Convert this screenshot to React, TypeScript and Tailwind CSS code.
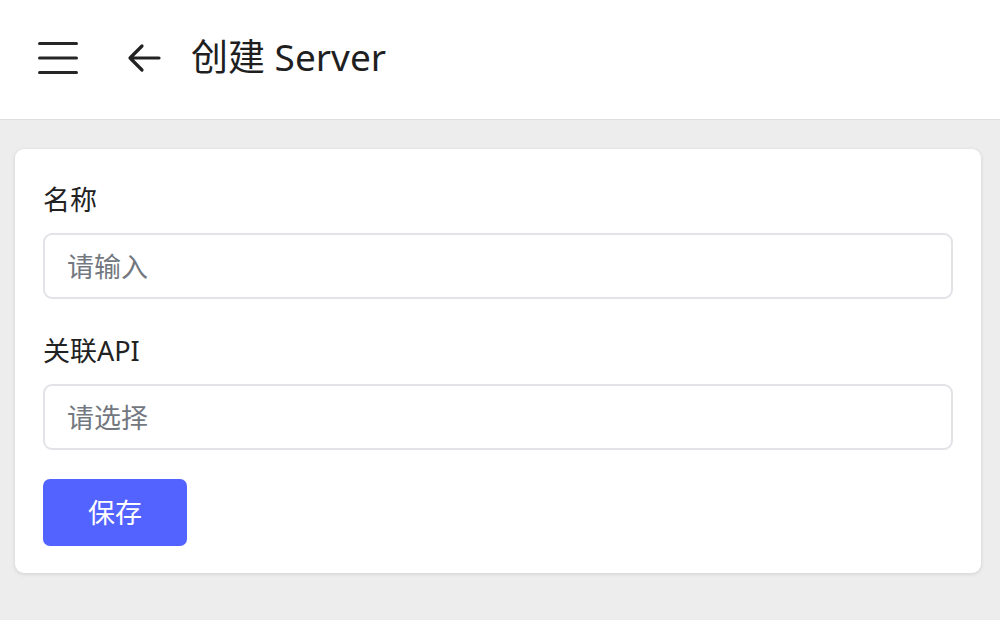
const font = { fontFamily: '"Noto Sans", "Noto Sans CJK SC", sans-serif' };

function MenuIcon() {
  return (
    <svg width="40" height="34" viewBox="0 0 40 34" fill="none">
      <path d="M1.5 2.5h37M1.5 17h37M1.5 31.5h37" stroke="#262626" strokeWidth="3" strokeLinecap="round" />
    </svg>
  );
}

function BackIcon() {
  return (
    <svg width="34" height="30" viewBox="0 0 34 30" fill="none">
      <path d="M32 15H3M15 3L3 15l12 12" stroke="#222" strokeWidth="3.2" strokeLinecap="round" strokeLinejoin="round" />
    </svg>
  );
}

export default function App() {
  return (
    <div className="w-[1000px] h-[620px] bg-[#ededed] overflow-hidden" style={font}>
      <header className="h-[120px] bg-white border-b border-[#dedede] flex items-center">
        <div className="ml-[38px] flex items-center pb-[3px]">
          <MenuIcon />
        </div>
        <div className="ml-[49px] flex items-center pb-[3px]">
          <BackIcon />
        </div>
        <h1 className="ml-[30px] text-[37px] text-[#1f1f1f] leading-none pb-[6px]">创建 Server</h1>
      </header>

      <div className="mt-[29px] ml-[15px] mr-[19px] bg-white rounded-[9px] shadow-[0_1px_4px_rgba(0,0,0,0.12)] px-[28px] pt-[30px] pb-[27px]">
        <label className="block text-[27px] leading-[42px] text-[#222]">名称</label>
        <div className="mt-[12px] h-[66px] border-2 border-[#e1e3e7] rounded-[9px] flex items-center px-[22px] pt-[3px]">
          <span className="text-[27px] text-[#737880]">请输入</span>
        </div>

        <label className="block mt-[31px] text-[27px] leading-[42px] text-[#222]">关联API</label>
        <div className="mt-[12px] h-[66px] border-2 border-[#e1e3e7] rounded-[9px] flex items-center px-[22px] pt-[3px]">
          <span className="text-[27px] text-[#737880]">请选择</span>
        </div>

        <button className="mt-[29px] w-[144px] h-[67px] bg-[#5263ff] rounded-[7px] text-white text-[27px] flex items-center justify-center pt-[2px]">
          保存
        </button>
      </div>
    </div>
  );
}
